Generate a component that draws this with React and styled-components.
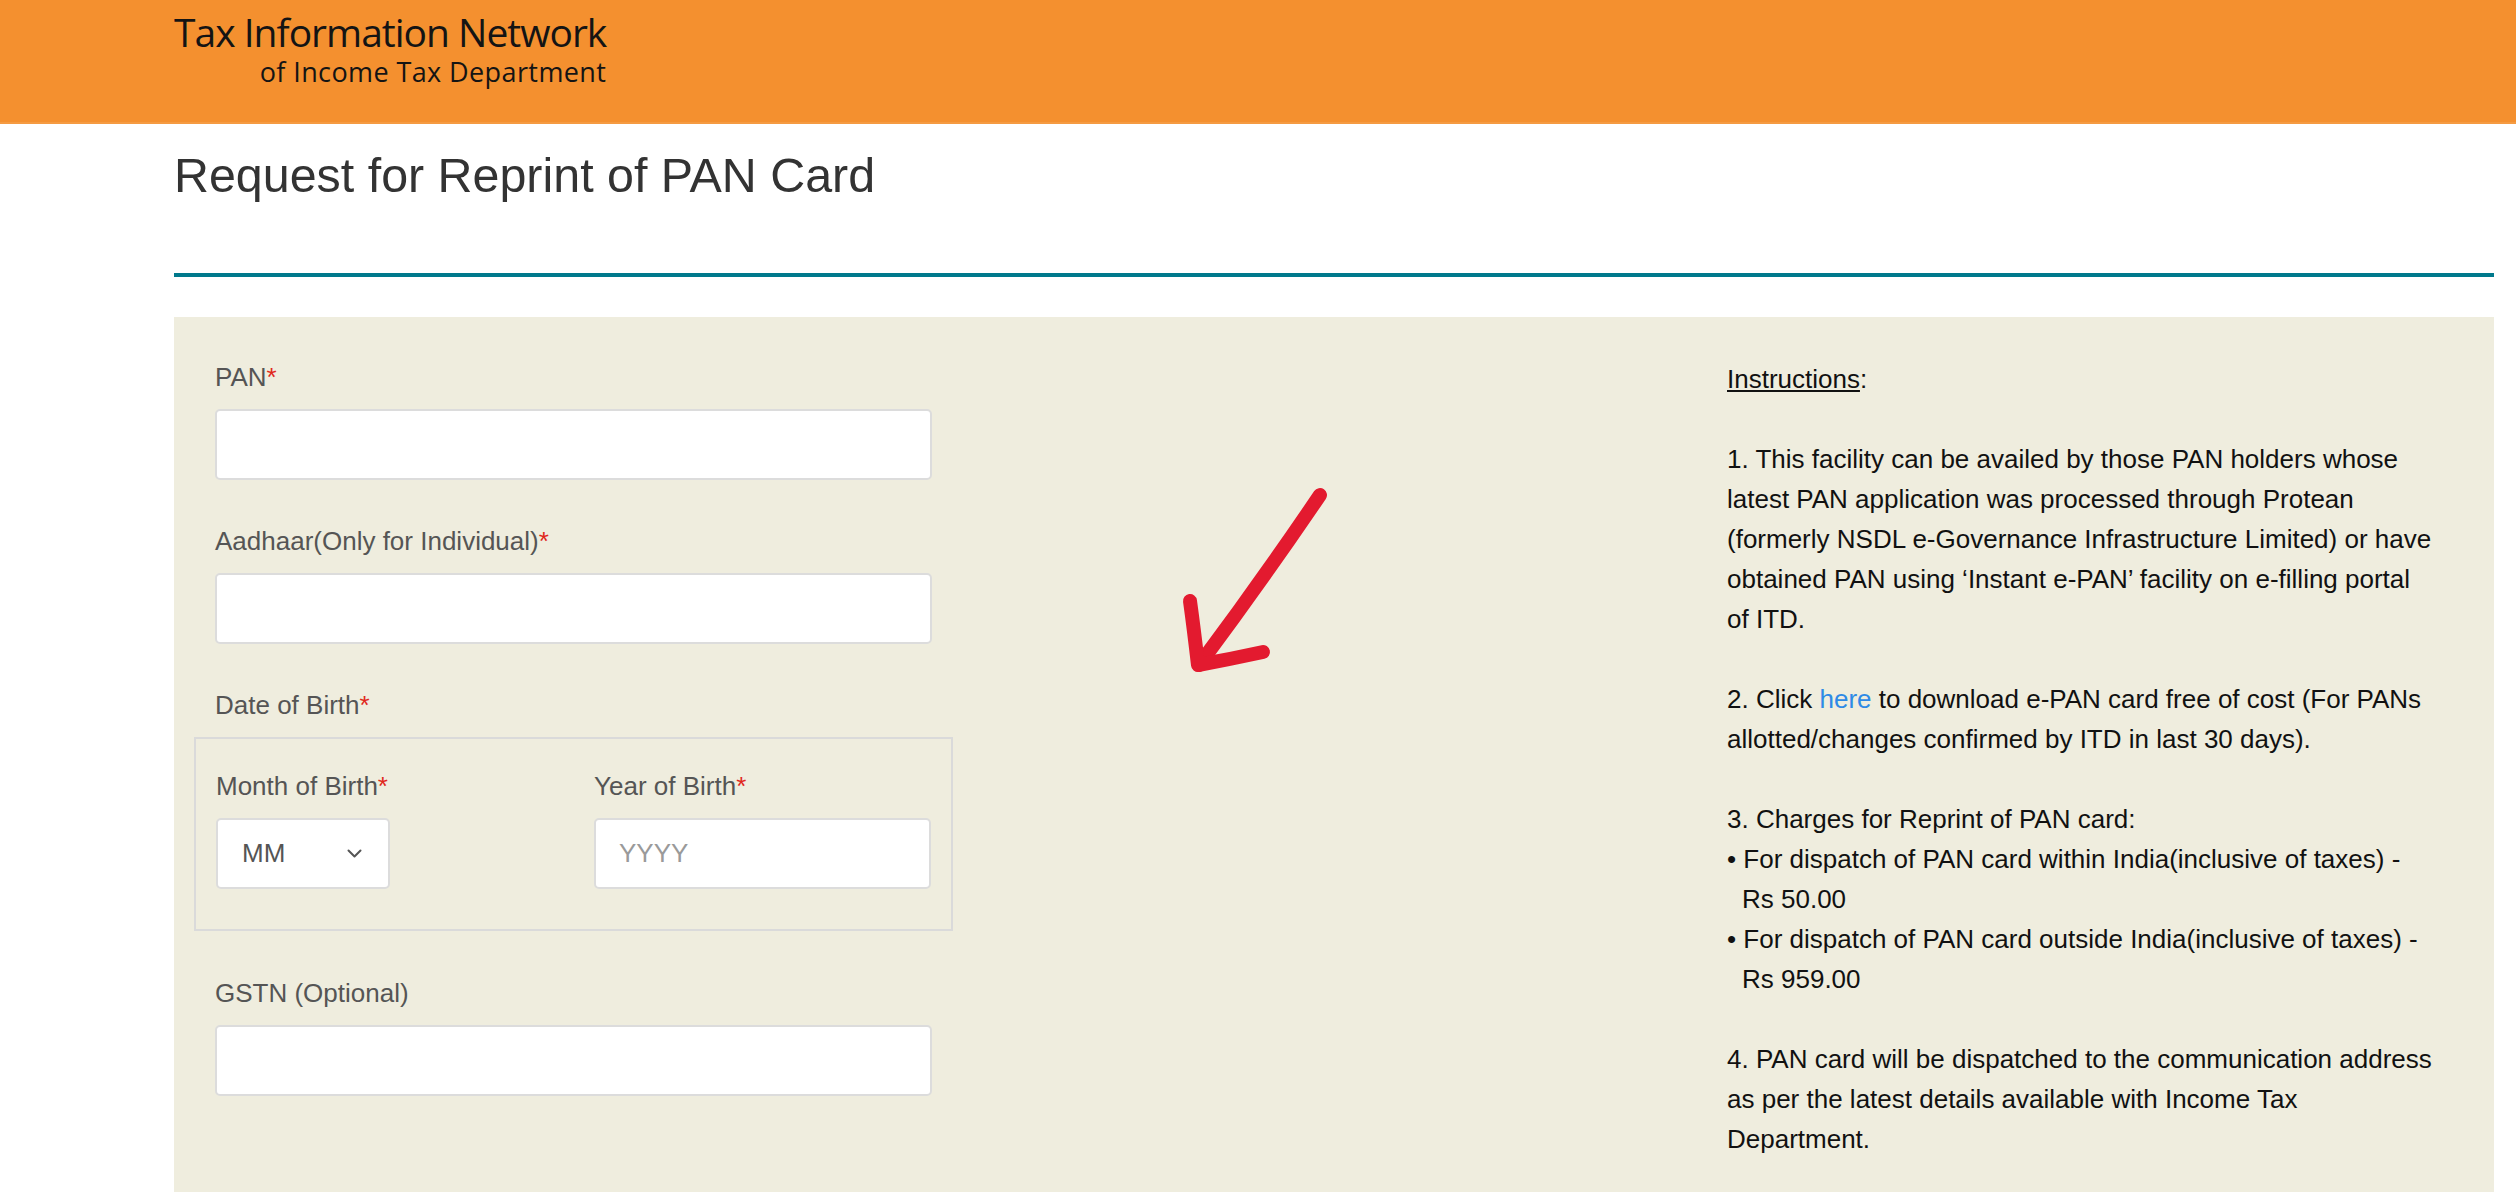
import React from "react";
import styled, { createGlobalStyle } from "styled-components";

const GlobalStyle = createGlobalStyle`
  html, body {
    margin: 0;
    padding: 0;
    background: #ffffff;
    overflow: hidden;
  }
  body {
    font-family: "Liberation Sans", Arial, sans-serif;
  }
  * { box-sizing: border-box; }
`;

const Header = styled.header`
  height: 124px;
  background: #f4902f;
  border-bottom: 2px solid #f59b42;
  padding: 12px 0 0 174px;
`;

const Logo = styled.div`
  display: inline-flex;
  flex-direction: column;
  align-items: flex-end;
  font-family: "Open Sans", "Noto Sans", sans-serif;
  color: #141414;
`;

const LogoMain = styled.div`
  font-size: 39px;
  line-height: 40px;
  letter-spacing: -1px;
`;

const LogoSub = styled.div`
  margin-top: 6px;
  font-size: 27px;
  line-height: 27px;
  letter-spacing: 0.4px;
`;

const Main = styled.main`
  margin-left: 174px;
  width: 2320px;
`;

const Title = styled.h1`
  margin: 25px 0 0;
  font-size: 48.4px;
  line-height: 52.8px;
  font-weight: normal;
  color: #333333;
`;

const Divider = styled.hr`
  margin: 71px 0 0;
  border: 0;
  height: 4px;
  background: #00798c;
`;

const Panel = styled.section`
  position: relative;
  margin-top: 40px;
  background: #efedde;
  display: grid;
  grid-template-columns: 759px 1fr 740px;
  padding: 42px 27px 80px 20px;
`;

const FormColumn = styled.div`
  display: flex;
  flex-direction: column;
`;

const FormGroup = styled.div`
  display: flex;
  flex-direction: column;
  padding: ${(p) => (p.$inner ? "0" : "0 21px")};
  margin-bottom: ${(p) => (p.$gap !== undefined ? p.$gap : p.$inner ? "0" : "43px")};
`;

const Label = styled.label`
  font-size: 26px;
  line-height: 36px;
  color: #555555;
  margin-bottom: 14px;
`;

const Req = styled.span`
  color: #e0281c;
`;

const TextInput = styled.input`
  height: 71px;
  width: 100%;
  border: 2px solid #dcdcdc;
  border-radius: 5px;
  background: #ffffff;
  padding: 0 23px;
  font-family: "Liberation Sans", Arial, sans-serif;
  font-size: 26px;
  color: #555555;
  outline: none;
  &::placeholder {
    color: #9a9a9a;
  }
`;

const Fieldset = styled.fieldset`
  margin: 0 0 44px;
  border: 2px solid #dadada;
  padding: 29px 20px 40px;
  display: grid;
  grid-template-columns: 378px 1fr;
  min-width: 0;
`;

const SelectBox = styled.div`
  height: 71px;
  width: 174px;
  border: 2px solid #dcdcdc;
  border-radius: 5px;
  background: #ffffff;
  padding: 0 26px 0 24px;
  display: flex;
  align-items: center;
  justify-content: space-between;
  font-size: 26px;
  color: #555555;
`;

const Arrow = styled.svg`
  position: absolute;
  left: 1001px;
  top: 163px;
  width: 160px;
  height: 200px;
  overflow: visible;
`;

const Instructions = styled.div`
  grid-column: 3;
  font-size: 26px;
  line-height: 40px;
  color: #111111;
`;

const Para = styled.div`
  margin: 0 0 40px;
`;

const Line = styled.span`
  display: block;
  white-space: pre;
  padding-left: ${(p) => (p.$indent ? "15px" : "0")};
`;

const Underlined = styled.span`
  text-decoration: underline;
`;

const Link = styled.a`
  color: #2e8ae6;
  text-decoration: none;
`;

function Field({ label, required, placeholder }) {
  return (
    <FormGroup>
      <Label>
        {label}
        {required && <Req>*</Req>}
      </Label>
      <TextInput placeholder={placeholder} />
    </FormGroup>
  );
}

export default function App() {
  return (
    <>
      <GlobalStyle />
      <Header>
        <Logo>
          <LogoMain>Tax Information Network</LogoMain>
          <LogoSub>of Income Tax Department</LogoSub>
        </Logo>
      </Header>
      <Main>
        <Title>Request for Reprint of PAN Card</Title>
        <Divider />
        <Panel>
          <FormColumn>
            <Field label="PAN" required />
            <Field label="Aadhaar(Only for Individual)" required />
            <FormGroup $gap="0">
              <Label>
                Date of Birth<Req>*</Req>
              </Label>
            </FormGroup>
            <Fieldset>
              <FormGroup $inner>
                <Label>
                  Month of Birth<Req>*</Req>
                </Label>
                <SelectBox>
                  <span>MM</span>
                  <svg width="15" height="9" viewBox="0 0 15 9">
                    <path
                      d="M1.5 1.5 L7.5 7.5 L13.5 1.5"
                      fill="none"
                      stroke="#555"
                      strokeWidth="2"
                      strokeLinecap="round"
                      strokeLinejoin="round"
                    />
                  </svg>
                </SelectBox>
              </FormGroup>
              <FormGroup $inner>
                <Label>
                  Year of Birth<Req>*</Req>
                </Label>
                <TextInput placeholder="YYYY" />
              </FormGroup>
            </Fieldset>
            <Field label="GSTN (Optional)" />
          </FormColumn>

          <Arrow viewBox="0 0 160 200">
            <path
              d="M145 15 Q 86 102 24 185"
              fill="none"
              stroke="#e31a2f"
              strokeWidth="14"
              strokeLinecap="round"
            />
            <path
              d="M15 121 Q 19 150 23 185 Q 56 179 88 172"
              fill="none"
              stroke="#e31a2f"
              strokeWidth="14"
              strokeLinecap="round"
              strokeLinejoin="round"
            />
          </Arrow>

          <Instructions>
            <Para>
              <Line>
                <Underlined>Instructions</Underlined>:
              </Line>
            </Para>
            <Para>
              <Line>1. This facility can be availed by those PAN holders whose</Line>
              <Line>latest PAN application was processed through Protean</Line>
              <Line>(formerly NSDL e-Governance Infrastructure Limited) or have</Line>
              <Line>obtained PAN using ‘Instant e-PAN’ facility on e-filling portal</Line>
              <Line>of ITD.</Line>
            </Para>
            <Para>
              <Line>
                2. Click <Link href="#">here</Link> to download e-PAN card free of cost (For PANs
              </Line>
              <Line>allotted/changes confirmed by ITD in last 30 days).</Line>
            </Para>
            <Para>
              <Line>3. Charges for Reprint of PAN card:</Line>
              <Line>• For dispatch of PAN card within India(inclusive of taxes) -</Line>
              <Line $indent>Rs 50.00</Line>
              <Line>• For dispatch of PAN card outside India(inclusive of taxes) -</Line>
              <Line $indent>Rs 959.00</Line>
            </Para>
            <Para>
              <Line>4. PAN card will be dispatched to the communication address</Line>
              <Line>as per the latest details available with Income Tax</Line>
              <Line>Department.</Line>
            </Para>
          </Instructions>
        </Panel>
      </Main>
    </>
  );
}
